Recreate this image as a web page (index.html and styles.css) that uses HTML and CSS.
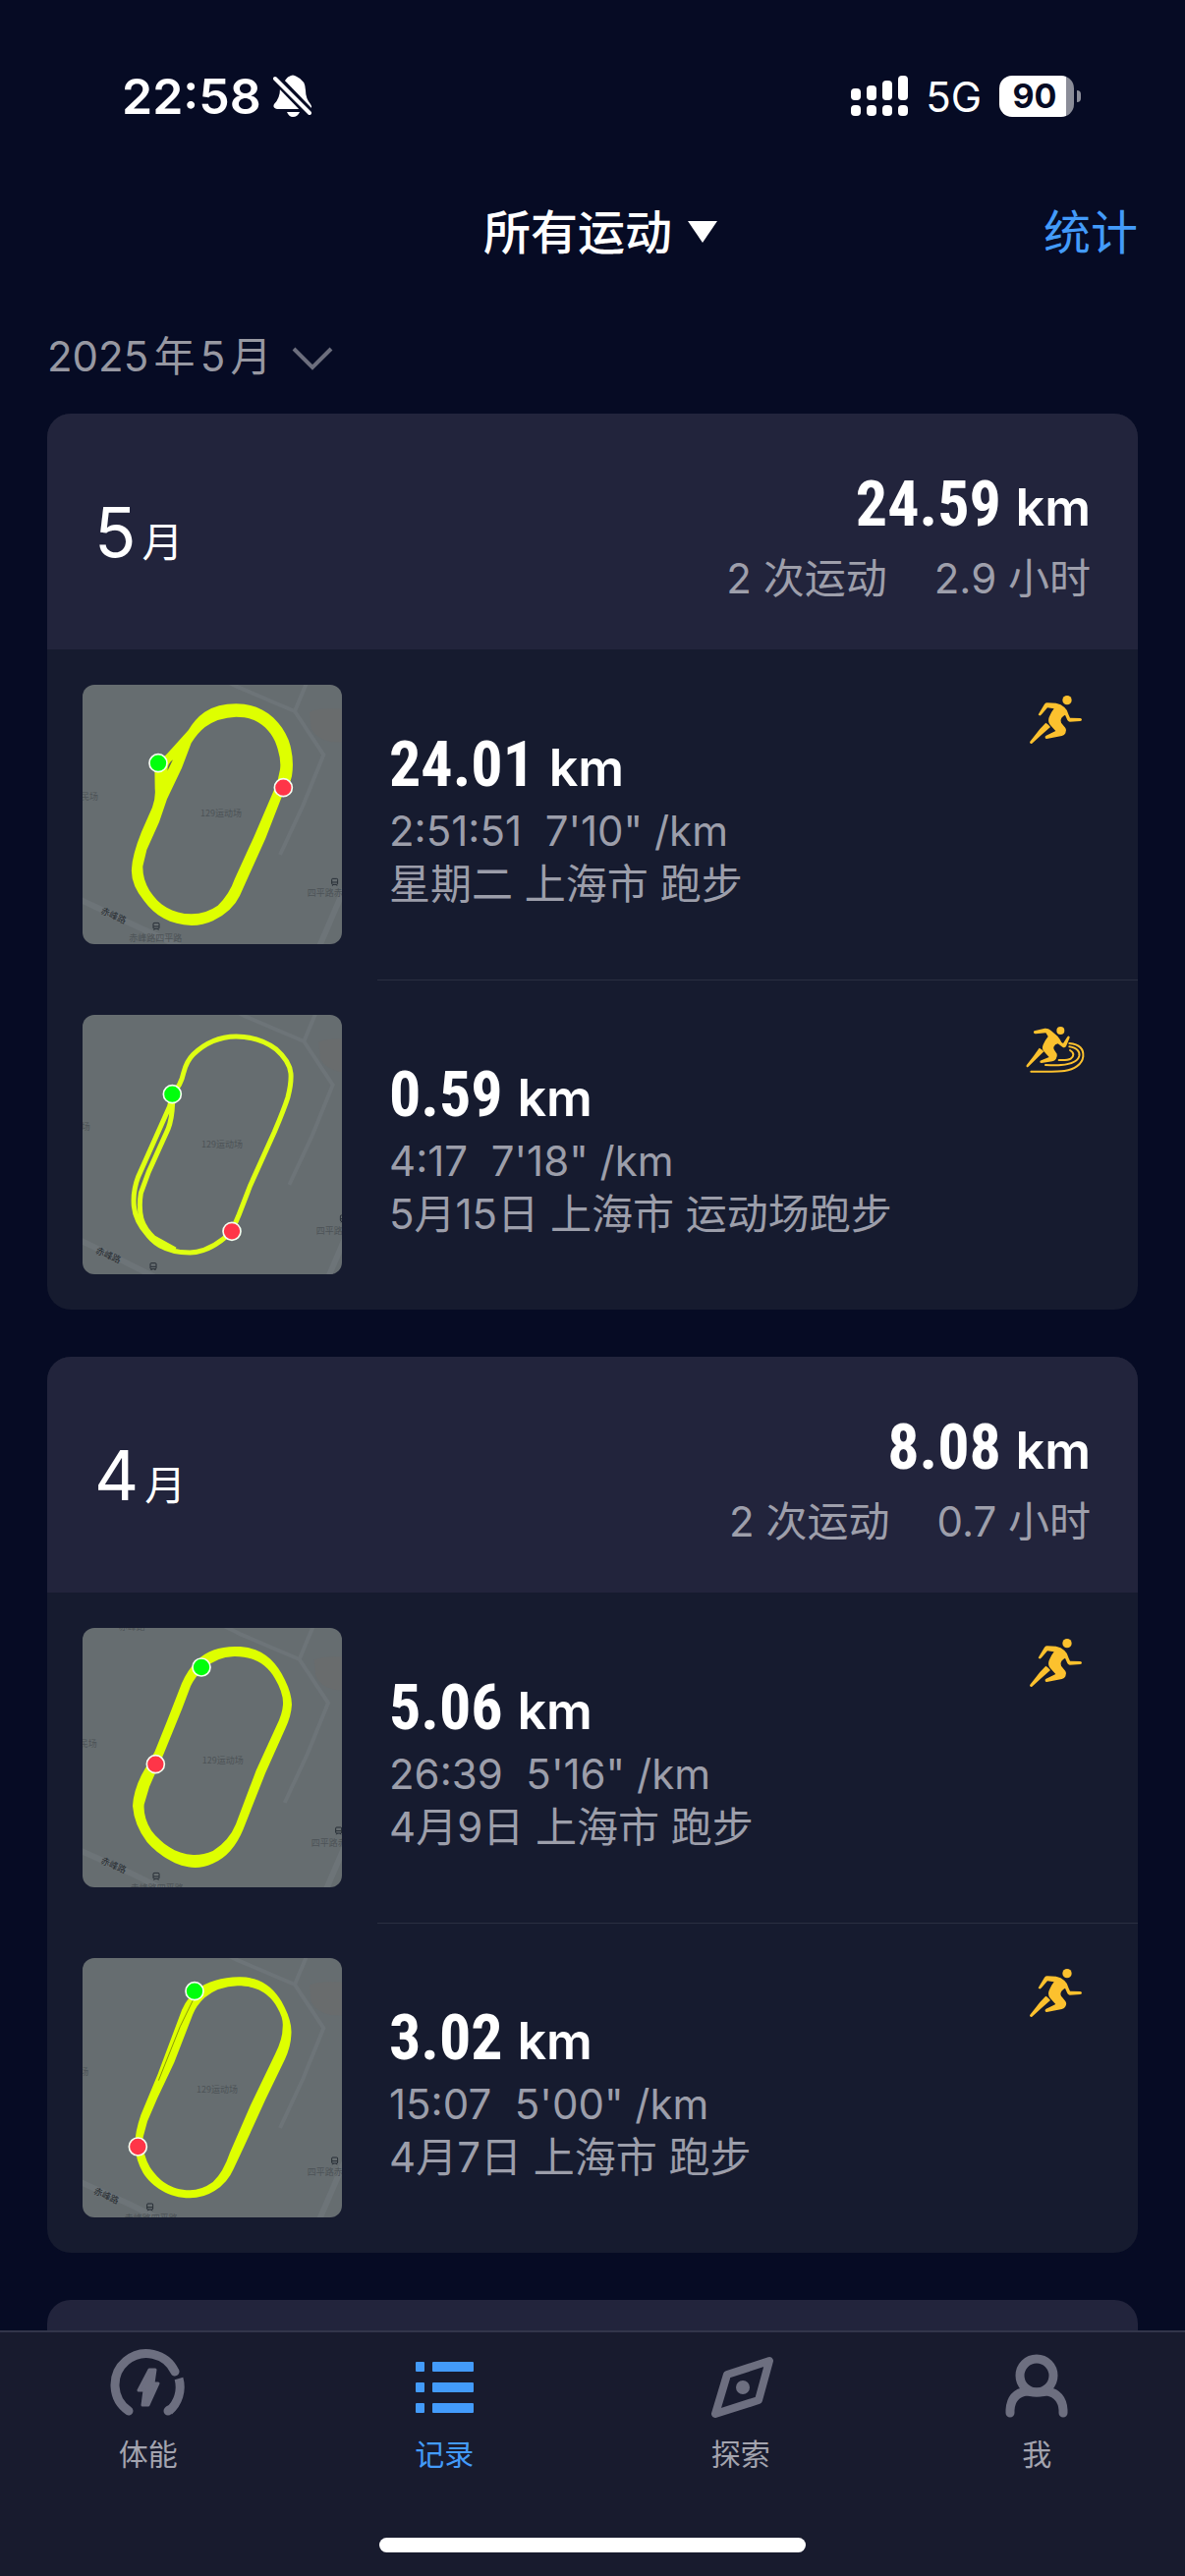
FILE: index.html
```html
<!DOCTYPE html>
<html lang="zh-CN">
<head>
    <meta charset="UTF-8">
    <meta name="viewport" content="width=device-width, initial-scale=1.0">
    <title>运动记录</title>
    <link rel="stylesheet" href="styles.css">
</head>
<body>
    <!-- Shared symbols -->
    <svg class="symbols" aria-hidden="true">
        <symbol id="run" viewBox="72 36 180 180">
            <circle cx="198" cy="68" r="14"/>
            <path d="M111 110L129 80Q132 76 138 76L164 77Q180 80 190 90Q200 99 202 111L207 122L238 123Q243 124 243 128Q243 131 238 132L206 134Q201 133 199 129L192 113Q186 116 181 122Q176 130 180 137L193 153Q198 160 193 169Q190 175 182 177L136 186Q131 186 131 182Q130 178 134 176L163 162L146 143Q138 134 143 120Q149 105 158 94L138 91L120 112Q116 117 112 114Q109 113 111 110Z"/>
            <path d="M133 137Q140 141 147 150L123 171L91 200Q87 202 85 199Q83 197 85 194L115 156Z"/>
        </symbol>
        <symbol id="track-run" viewBox="72 54 180 180">
            <circle cx="178" cy="87" r="12"/>
            <path d="M98 88L130 80Q140 79 149 87L169 104Q176 112 181 123L186 126L199 106Q202 102 205 105Q207 107 205 111L195 135Q190 141 184 137L170 127Q161 128 157 137Q156 142 159 146L167 158Q169 166 164 174Q160 180 153 181L120 186Q115 186 115 182Q115 179 119 178L143 168L126 149Q120 142 125 130Q129 119 140 105L133 94L102 97Q97 97 96 93Q95 90 98 88Z"/>
            <path d="M113 140Q121 143 127 151L79 198Q76 200 74 197Q73 195 74 193L96 164Z"/>
            <g fill="none" stroke="currentColor" stroke-width="6" stroke-linecap="round">
                <path d="M205 126C237 128 249 145 247 166C244 190 220 206 190 210Q175 213 88 212"/>
                <path d="M205 136C230 140 238 153 235 165C230 182 204 190 180 192Q165 194 132 192"/>
                <path d="M207 147C221 155 219 166 209 173Q201 178 173 177"/>
            </g>
        </symbol>
        <symbol id="roads" viewBox="0 0 900 900">
            <path class="map-block" d="M735 135Q760 115 900 130L900 230L800 225Q755 215 740 185Z"/>
            <path class="map-road" d="M400 0L510 55L690 132L778 265L715 420L645 570M690 132L745 0"/>
            <path class="map-road-wide" d="M900 560L834 690L765 850"/>
        </symbol>
        <symbol id="bus" viewBox="0 0 24 28">
            <rect x="3" y="3" width="18" height="18" rx="3" fill="none" stroke="#252c34" stroke-width="3"/>
            <path d="M4 14H20M5 25L8 21M19 25L16 21" stroke="#252c34" stroke-width="3"/>
        </symbol>
    </svg>

    <div class="app">
        <div class="status-bar">
            <div class="status-left">
                <span class="status-time">22:58</span>
                <svg class="icon-bell" viewBox="0 0 40 44">
                    <path fill="#fff" d="M12 6Q15 2 16 2Q20 -1 24 2Q33 6 33 16Q33 24 38 30Q41 35 36 35H4Q-1 34 1 30Q7 24 7 14Q7 10 12 6ZM14 38H27Q25 43 20 43Q16 43 14 38Z"/>
                    <path stroke="#060b24" stroke-width="10" d="M2 3L38 40"/>
                    <path stroke="#fff" stroke-width="4" stroke-linecap="round" d="M2 4L37 39"/>
                </svg>
            </div>
            <div class="status-right">
                <svg class="icon-signal" viewBox="0 0 58 42" fill="#fff">
                    <rect x="0" y="13" width="10" height="12" rx="4"/>
                    <rect x="16" y="10" width="10" height="15" rx="4"/>
                    <rect x="32" y="5" width="10" height="20" rx="4"/>
                    <rect x="48" y="0" width="10" height="25" rx="4"/>
                    <rect x="0" y="30" width="10" height="11" rx="4"/>
                    <rect x="16" y="30" width="10" height="11" rx="4"/>
                    <rect x="32" y="30" width="10" height="11" rx="4"/>
                    <rect x="48" y="30" width="10" height="11" rx="4"/>
                </svg>
                <span class="status-network">5G</span>
                <span class="battery"><span class="battery-level">90</span></span>
            </div>
        </div>

        <header class="nav-bar">
            <button type="button" class="nav-title">所有运动
                <svg class="icon-triangle" viewBox="0 0 30 22"><path d="M0 0H30L15 22Z" fill="#fff"/></svg>
            </button>
            <a href="#stats" class="nav-link">统计</a>
        </header>

        <button type="button" class="date-filter">2025年5月
            <svg class="icon-chevron" viewBox="0 0 42 24"><path d="M2 2L21 21L40 2"/></svg>
        </button>

        <main class="record-list">
            <section class="month-card">
                <div class="month-header">
                    <h2 class="month-name">5<small>月</small></h2>
                    <div class="month-total">
                        <p class="distance">24.59 <span>km</span></p>
                        <p class="month-stats"><span>2 次运动</span><span>2.9 小时</span></p>
                    </div>
                </div>
                <article class="record">
                    <svg class="map" viewBox="42 51 792 792">
                        <use href="#roads" width="900" height="900"/>
                        <path class="map-road-wide" d="M20 700L210 790L340 850"/>
                        <text x="36" y="401">民场</text>
                        <text x="402" y="452">129运动场</text>
                        <text x="728" y="697">四平路赤</text>
                        <text x="184" y="835">赤峰路四平路</text>
                        <text class="map-street" x="96" y="748" transform="rotate(24 96 748)">赤峰路</text>
                        <use href="#bus" x="800" y="640" width="24" height="28"/>
                        <use href="#bus" x="255" y="775" width="24" height="28"/>
                        <path class="route" d="M511 109C590 109 644 155 671 220Q690 275 681 330Q676 355 650 394L601 520L522 695Q500 742 440 772Q410 786 375 786C310 784 262 755 230 711Q188 660 192 612Q194 570 222 500L255 425Q266 395 263 368L262 300L300 262L365 190Q385 155 415 134Q455 109 511 109ZM511 149C575 149 610 182 630 224Q650 275 645 310Q641 340 627 371L565 516L507 643Q490 692 455 725Q420 750 375 751C315 750 275 723 247 680Q225 645 226 605L238 555L276 470L300 400L345 305L374 229Q393 198 416 180Q455 151 511 149Z"/>
                        <path d="M301 314Q302 290 318 280Z" fill="#5c6651"/>
                        <circle class="pin pin-start" cx="273" cy="290" r="27"/>
                        <circle class="pin pin-end" cx="655" cy="365" r="27"/>
                    </svg>
                    <div class="record-info">
                        <p class="distance">24.01 <span>km</span></p>
                        <p>2:51:51&nbsp; 7'10" /km</p>
                        <p>星期二 上海市 跑步</p>
                    </div>
                    <svg class="sport-icon"><use href="#run"/></svg>
                </article>
                <article class="record">
                    <svg class="map" viewBox="42 51 792 792">
                        <use href="#roads" x="28" width="900" height="900"/>
                        <path class="map-road-wide" d="M20 732L160 800L270 855"/>
                        <text x="38" y="402">场</text>
                        <text x="405" y="457">129运动场</text>
                        <text x="755" y="719">四平路</text>
                        <text class="map-street" x="80" y="777" transform="rotate(24 80 777)">赤峰路</text>
                        <use href="#bus" x="826" y="660" width="24" height="28"/>
                        <use href="#bus" x="246" y="806" width="24" height="28"/>
                        <path class="route-line" d="M498 712L520 660L554 572L628 408Q658 337 669 302Q680 260 678 230Q675 193 632 155Q580 117 511 117Q435 118 380 172Q360 192 351 226Q342 268 316 293"/>
                        <path class="route-line" d="M316 293L308 330L212 545Q195 590 199 635Q203 680 242 724Q285 777 370 777Q435 775 498 712M317 320Q315 370 303 400L244 530L220 595Q213 640 222 675Q232 706 260 732L325 768"/>
                        <circle class="pin pin-start" cx="316" cy="293" r="27"/>
                        <circle class="pin pin-end" cx="498" cy="712" r="27"/>
                    </svg>
                    <div class="record-info">
                        <p class="distance">0.59 <span>km</span></p>
                        <p>4:17&nbsp; 7'18" /km</p>
                        <p>5月15日 上海市 运动场跑步</p>
                    </div>
                    <svg class="sport-icon"><use href="#track-run"/></svg>
                </article>
            </section>

            <section class="month-card">
                <div class="month-header">
                    <h2 class="month-name">4<small>月</small></h2>
                    <div class="month-total">
                        <p class="distance">8.08 <span>km</span></p>
                        <p class="month-stats"><span>2 次运动</span><span>0.7 小时</span></p>
                    </div>
                </div>
                <article class="record">
                    <svg class="map" viewBox="42 51 792 792">
                        <use href="#roads" x="14" y="15" width="900" height="900"/>
                        <path class="map-road-wide" d="M20 724L190 800L300 855"/>
                        <text x="32" y="414">民场</text>
                        <text x="407" y="466">129运动场</text>
                        <text x="740" y="717">四平路赤</text>
                        <text x="188" y="855">赤峰路四平路</text>
                        <text x="152" y="56">赤峰路</text>
                        <text class="map-street" x="96" y="768" transform="rotate(24 96 768)">赤峰路</text>
                        <use href="#bus" x="812" y="657" width="24" height="28"/>
                        <use href="#bus" x="255" y="796" width="24" height="28"/>
                        <path class="route" d="M511 108C585 108 630 145 660 210Q680 250 681 285Q679 320 662 356L600 495L533 665Q500 745 440 770Q410 783 386 783C330 782 275 745 239 705Q200 655 195 595Q197 550 222 500L262 430L300 335L345 220Q362 180 392 150Q435 107 511 108ZM505 138C565 137 605 163 629 205Q656 250 654 285Q652 315 634 350L572 486L510 650Q490 700 440 732Q410 745 380 744C325 742 282 708 252 670Q227 630 230 590L246 536L290 435L345 300L372 229Q386 200 410 178Q450 139 505 138Z"/>
                        <circle class="pin pin-start" cx="405" cy="171" r="27"/>
                        <circle class="pin pin-end" cx="265" cy="467" r="27"/>
                    </svg>
                    <div class="record-info">
                        <p class="distance">5.06 <span>km</span></p>
                        <p>26:39&nbsp; 5'16" /km</p>
                        <p>4月9日 上海市 跑步</p>
                    </div>
                    <svg class="sport-icon"><use href="#run"/></svg>
                </article>
                <article class="record">
                    <svg class="map" viewBox="42 51 792 792">
                        <use href="#roads" width="900" height="900"/>
                        <path class="map-road-wide" d="M20 728L190 805L290 855"/>
                        <text x="34" y="407">场</text>
                        <text x="390" y="461">129运动场</text>
                        <text x="728" y="715">四平路赤</text>
                        <text x="170" y="855">赤峰路四平路</text>
                        <text class="map-street" x="74" y="769" transform="rotate(24 74 769)">赤峰路</text>
                        <use href="#bus" x="800" y="657" width="24" height="28"/>
                        <use href="#bus" x="236" y="798" width="24" height="28"/>
                        <path class="route" d="M520 109C585 108 630 140 659 202Q683 250 679 287Q678 320 660 360L602 480L536 625L503 695Q485 737 445 762Q410 784 370 784C305 783 255 750 227 707Q205 670 202 625Q201 585 220 530L272 405L345 210Q360 175 390 148Q440 110 520 109ZM515 136C575 136 612 158 637 203Q656 235 653 262Q653 300 630 344L555 500L492 645Q472 705 440 735Q405 760 370 760C310 759 275 730 248 690Q222 645 227 598L240 550L270 480L322 370L378 225Q390 195 415 172Q455 138 515 136Z"/>
                        <path d="M380 178L340 260L274 425" fill="none" stroke="#5d6808" stroke-width="2"/>
                        <circle class="pin pin-start" cx="384" cy="152" r="27"/>
                        <circle class="pin pin-end" cx="211" cy="627" r="27"/>
                    </svg>
                    <div class="record-info">
                        <p class="distance">3.02 <span>km</span></p>
                        <p>15:07&nbsp; 5'00" /km</p>
                        <p>4月7日 上海市 跑步</p>
                    </div>
                    <svg class="sport-icon"><use href="#run"/></svg>
                </article>
            </section>

            <section class="month-card">
                <div class="month-header"></div>
            </section>
        </main>

        <footer class="bottom-bar">
            <nav class="tabs">
                <a href="#fitness" class="tab">
                    <svg viewBox="0 0 80 72" fill="none" stroke="currentColor" stroke-width="9" stroke-linecap="round">
                        <path d="M20 64A32 32 0 1 1 67 24"/>
                        <path stroke-linecap="butt" d="M71 31A32 32 0 0 1 61 64"/>
                        <path d="M60 64L61 63"/>
                        <path d="M41 22H47L45 36H50L40 58H34L36 43H30Z" fill="currentColor" stroke-width="3" stroke-linejoin="round"/>
                    </svg>
                    体能
                </a>
                <a href="#records" class="tab active">
                    <svg viewBox="0 0 80 72" fill="currentColor">
                        <rect x="11" y="14" width="9" height="10" rx="1"/>
                        <rect x="28" y="14" width="42" height="10" rx="1"/>
                        <rect x="11" y="35" width="9" height="10" rx="1"/>
                        <rect x="28" y="35" width="42" height="10" rx="1"/>
                        <rect x="11" y="56" width="9" height="10" rx="1"/>
                        <rect x="28" y="56" width="42" height="10" rx="1"/>
                    </svg>
                    记录
                </a>
                <a href="#explore" class="tab">
                    <svg viewBox="0 0 80 72" fill="none" stroke="currentColor" stroke-width="8" stroke-linejoin="round">
                        <path d="M69 13L58 53L14 67L26 27Z"/>
                        <circle cx="42" cy="40" r="7" fill="currentColor" stroke="none"/>
                    </svg>
                    探索
                </a>
                <a href="#me" class="tab">
                    <svg viewBox="0 0 80 72" fill="none" stroke="currentColor" stroke-width="9" stroke-linecap="round">
                        <circle cx="40" cy="28" r="17"/>
                        <path d="M13 66V63Q14 46 30 44Q40 46 51 44Q66 47 67 63V66"/>
                    </svg>
                    我
                </a>
            </nav>
            <div class="home-indicator"></div>
        </footer>
    </div>
</body>
</html>
```

FILE: styles.css
```css
* {
    margin: 0;
    padding: 0;
    box-sizing: border-box;
}

body {
    font-family: Inter, 'Noto Sans CJK SC', sans-serif;
    background-color: #060b24;
    color: #ffffff;
}

button {
    font-family: inherit;
    background: none;
    border: none;
    cursor: pointer;
}

a {
    text-decoration: none;
}

.symbols {
    position: absolute;
    width: 0;
    height: 0;
}

.app {
    display: flex;
    flex-direction: column;
    height: 100vh;
    overflow: hidden;
}

/* Status bar */
.status-bar {
    display: flex;
    justify-content: space-between;
    align-items: center;
    height: 186px;
    padding: 10px 106px 0 124px;
}

.status-left,
.status-right {
    display: flex;
    align-items: center;
}

.status-left {
    gap: 12px;
}

.status-right {
    gap: 18px;
}

.status-time {
    font-size: 50px;
    font-weight: 600;
}

.icon-bell {
    width: 40px;
    height: 44px;
}

.icon-signal {
    width: 58px;
    height: 42px;
}

.status-network {
    font-size: 42px;
}

.battery {
    display: flex;
    align-items: center;
    gap: 3px;
}

.battery-level {
    width: 76px;
    height: 42px;
    padding-right: 4px;
    border-radius: 13px;
    background: linear-gradient(to right, #ffffff 90%, #8b8d98 90%);
    color: #060b24;
    font-size: 34px;
    font-weight: 700;
    line-height: 42px;
    text-align: center;
}

.battery::after {
    content: '';
    width: 4px;
    height: 12px;
    border-radius: 0 4px 4px 0;
    background-color: #8b8d98;
}

/* Navigation */
.nav-bar {
    display: grid;
    grid-template-columns: 1fr auto 1fr;
    align-items: center;
    height: 100px;
    padding: 0 48px 6px;
}

.nav-title {
    grid-column: 2;
    display: flex;
    align-items: center;
    gap: 16px;
    padding-left: 16px;
    color: #ffffff;
    font-size: 48px;
    font-weight: 500;
}

.icon-triangle {
    width: 30px;
    height: 22px;
    margin-top: 6px;
}

.nav-link {
    justify-self: end;
    color: #439bfa;
    font-size: 48px;
}

.date-filter {
    display: flex;
    align-items: center;
    gap: 20px;
    padding: 42px 48px 23px;
    color: #9798a2;
    font-size: 42px;
    line-height: 70px;
    text-autospace: normal;
}

.icon-chevron {
    width: 42px;
    height: 24px;
    margin-top: 4px;
    fill: none;
    stroke: #6c6e7d;
    stroke-width: 4;
}

/* Records */
.record-list {
    flex: 1;
    min-height: 0;
    display: flex;
    flex-direction: column;
    gap: 48px;
    padding: 0 48px;
    overflow: hidden;
}

.month-card {
    flex-shrink: 0;
    border-radius: 24px;
    background-color: #161b2f;
    overflow: hidden;
}

.month-header {
    display: flex;
    justify-content: space-between;
    align-items: center;
    min-height: 240px;
    padding: 0 48px;
    background-color: #22243c;
}

.month-name {
    padding-top: 12px;
    font-size: 70px;
    font-weight: 400;
    line-height: 90px;
}

.month-name small {
    margin-left: 6px;
    font-size: 42px;
}

.month-total {
    text-align: right;
}

.month-stats {
    display: flex;
    justify-content: flex-end;
    gap: 48px;
    margin-top: 8px;
    color: #9e9fab;
    font-size: 42px;
    line-height: 54px;
}

.distance {
    padding-top: 10px;
    color: #ffffff;
    font-family: 'Roboto Condensed', Roboto, sans-serif;
    font-size: 64px;
    font-weight: 700;
    line-height: 74px;
}

.distance span {
    font-family: Inter, sans-serif;
    font-size: 52px;
    font-weight: 600;
}

.record {
    display: flex;
    align-items: center;
    gap: 48px;
    height: 336px;
    padding: 36px 54px 36px 36px;
}

.record + .record {
    background: linear-gradient(#2a2f41, #2a2f41) 336px 0 / 100% 1px no-repeat;
}

.record-info {
    flex: 1;
    color: #9c9eaa;
    font-size: 42px;
    line-height: 54px;
}

.record-info .distance {
    line-height: 74px;
}

.sport-icon {
    align-self: flex-start;
    width: 60px;
    height: 60px;
    margin-top: 5px;
    color: #fcc12e;
    fill: currentColor;
}

/* Map thumbnails */
.map {
    width: 264px;
    height: 264px;
    border-radius: 12px;
    background-color: #666d70;
}

.map text {
    font-family: 'Noto Sans CJK SC', sans-serif;
    font-size: 27px;
    fill: #4d5357;
}

.map .map-street {
    fill: #252a2f;
}

.map-road,
.map-road-wide {
    fill: none;
    stroke: #6d7478;
    stroke-width: 12;
}

.map-road-wide {
    stroke-width: 18;
}

.map-block {
    fill: #696c6d;
}

.route {
    fill: #deff00;
    fill-rule: evenodd;
}

.route-line {
    fill: none;
    stroke: #deff13;
    stroke-width: 15;
}

.pin {
    stroke: #f4fff0;
    stroke-width: 5;
}

.pin-start {
    fill: #00ff0c;
}

.pin-end {
    fill: #ff3548;
}

/* Bottom bar */
.bottom-bar {
    height: 250px;
    border-top: 2px solid #32354a;
    background-color: #181b2e;
}

.tabs {
    display: flex;
    padding-top: 16px;
}

.tab {
    flex: 1;
    display: flex;
    flex-direction: column;
    align-items: center;
    gap: 16px;
    color: #a3a4af;
    font-size: 30px;
    line-height: 40px;
}

.tab svg {
    width: 80px;
    height: 72px;
    color: #6d6f80;
}

.tab.active,
.tab.active svg {
    color: #439bfa;
}

.home-indicator {
    width: 36%;
    height: 15px;
    margin: 65px auto 0;
    border-radius: 8px;
    background-color: #ffffff;
}
```
